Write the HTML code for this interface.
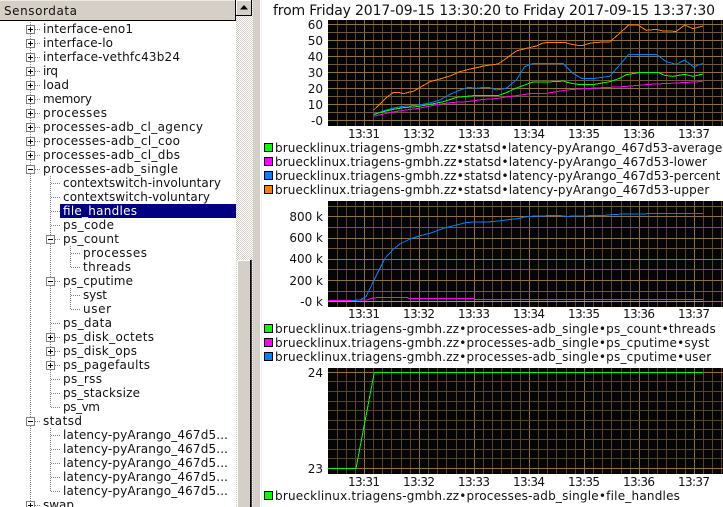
<!DOCTYPE html>
<html><head><meta charset="utf-8"><style>
html,body{margin:0;padding:0;background:#fff;width:723px;height:507px;overflow:hidden}
svg{display:block;position:absolute;left:0;top:0}
text{font-family:"DejaVu Sans",sans-serif;font-size:12px;fill:#111;white-space:pre}
.t{font-size:14px}
.a{font-size:12px}
.r{text-anchor:end}
.m{text-anchor:middle}
.l polyline{fill:none;stroke-width:3;shape-rendering:crispEdges}
</style></head><body>
<svg width="723" height="507" viewBox="0 0 723 507" xmlns="http://www.w3.org/2000/svg">
<defs>
<pattern id="ck" width="2" height="2" patternUnits="userSpaceOnUse"><rect width="2" height="2" fill="#fff"/><rect width="1" height="1" fill="#d4d0c8"/><rect x="1" y="1" width="1" height="1" fill="#d4d0c8"/></pattern>
<g id="plus"><rect x=".5" y=".5" width="8" height="8" fill="#fff" stroke="#808080"/><path d="M2 4.5H7M4.5 2V7" stroke="#000" fill="none"/></g>
<g id="minus"><rect x=".5" y=".5" width="8" height="8" fill="#fff" stroke="#808080"/><path d="M2 4.5H7" stroke="#000" fill="none"/></g>
<path id="vmin" fill="none" stroke-width="1" d="M337.5 0V1M346.5 0V1M355.5 0V1M373.5 0V1M382.5 0V1M391.5 0V1M401.5 0V1M410.5 0V1M428.5 0V1M437.5 0V1M446.5 0V1M456.5 0V1M465.5 0V1M483.5 0V1M492.5 0V1M501.5 0V1M511.5 0V1M520.5 0V1M538.5 0V1M547.5 0V1M556.5 0V1M566.5 0V1M575.5 0V1M593.5 0V1M602.5 0V1M611.5 0V1M621.5 0V1M630.5 0V1M648.5 0V1M657.5 0V1M666.5 0V1M676.5 0V1M685.5 0V1M703.5 0V1M712.5 0V1M721.5 0V1"/>
<path id="vmaj" fill="none" stroke-width="1" d="M364.5 0V1M419.5 0V1M474.5 0V1M529.5 0V1M584.5 0V1M639.5 0V1M694.5 0V1"/>
</defs>

<!-- left header -->
<rect x="0" y="0" width="235" height="20" fill="#d4d0c8"/>
<path d="M0 .5H235" stroke="#eeeae2"/>
<path d="M0 20.5H236M235.5 0V21" stroke="#000"/>
<text x="4" y="15" textLength="73" lengthAdjust="spacing">Sensordata</text>

<!-- selection -->
<rect x="60" y="204" width="176" height="14" fill="#000080"/>

<!-- tree lines -->
<g stroke="#808080" stroke-dasharray="1 1" fill="none">
<path d="M30.5 22V507"/>
<path d="M50.5 176V407.5"/>
<path d="M70.5 246V267.5M70.5 288V309.5"/>
<path d="M50.5 428V491.5"/>
<path d="M35 29.5H40M35 43.5H40M35 57.5H40M35 71.5H40M35 85.5H40M35 99.5H40M35 113.5H40M35 127.5H40M35 141.5H40M35 155.5H40M35 169.5H40M35 421.5H40M35 505.5H40"/>
<path d="M51 183.5H60M51 197.5H60M51 211.5H60M51 225.5H60M55 239.5H60M55 281.5H60M51 323.5H60M55 337.5H60M55 351.5H60M55 365.5H60M51 379.5H60M51 393.5H60M51 407.5H60M51 435.5H60M51 449.5H60M51 463.5H60M51 477.5H60M51 491.5H60"/>
<path d="M71 253.5H80M71 267.5H80M71 295.5H80M71 309.5H80"/>
</g>
<use href="#plus" x="26" y="25"/><use href="#plus" x="26" y="39"/><use href="#plus" x="26" y="53"/><use href="#plus" x="26" y="67"/><use href="#plus" x="26" y="81"/><use href="#plus" x="26" y="95"/><use href="#plus" x="26" y="109"/><use href="#plus" x="26" y="123"/><use href="#plus" x="26" y="137"/><use href="#plus" x="26" y="151"/>
<use href="#minus" x="26" y="165"/>
<use href="#minus" x="46" y="235"/><use href="#minus" x="46" y="277"/>
<use href="#plus" x="46" y="333"/><use href="#plus" x="46" y="347"/><use href="#plus" x="46" y="361"/>
<use href="#minus" x="26" y="417"/><use href="#plus" x="26" y="501"/>

<!-- tree text -->
<text x="43" y="33" textLength="90">interface-eno1</text>
<text x="43" y="47" textLength="70">interface-lo</text>
<text x="43" y="61" textLength="137">interface-vethfc43b24</text>
<text x="43" y="75" textLength="15">irq</text>
<text x="43" y="89" textLength="26">load</text>
<text x="43" y="103" textLength="49">memory</text>
<text x="43" y="117" textLength="64">processes</text>
<text x="43" y="131" textLength="160">processes-adb_cl_agency</text>
<text x="43" y="145" textLength="137">processes-adb_cl_coo</text>
<text x="43" y="159" textLength="137">processes-adb_cl_dbs</text>
<text x="43" y="173" textLength="135">processes-adb_single</text>
<text x="63" y="187" textLength="158">contextswitch-involuntary</text>
<text x="63" y="201" textLength="147">contextswitch-voluntary</text>
<text x="63" y="215" textLength="74" style="fill:#fff">file_handles</text>
<text x="63" y="229" textLength="51">ps_code</text>
<text x="63" y="243" textLength="56">ps_count</text>
<text x="83" y="257" textLength="64">processes</text>
<text x="83" y="271" textLength="48">threads</text>
<text x="63" y="285" textLength="70">ps_cputime</text>
<text x="83" y="299" textLength="24">syst</text>
<text x="83" y="313" textLength="28">user</text>
<text x="63" y="327" textLength="49">ps_data</text>
<text x="63" y="341" textLength="91">ps_disk_octets</text>
<text x="63" y="355" textLength="74">ps_disk_ops</text>
<text x="63" y="369" textLength="87">ps_pagefaults</text>
<text x="63" y="383" textLength="39">ps_rss</text>
<text x="63" y="397" textLength="77">ps_stacksize</text>
<text x="63" y="411" textLength="37">ps_vm</text>
<text x="43" y="425" textLength="39">statsd</text>
<text x="63" y="439" textLength="165">latency-pyArango_467d5...</text>
<text x="63" y="453" textLength="165">latency-pyArango_467d5...</text>
<text x="63" y="467" textLength="165">latency-pyArango_467d5...</text>
<text x="63" y="481" textLength="165">latency-pyArango_467d5...</text>
<text x="63" y="495" textLength="165">latency-pyArango_467d5...</text>
<text x="43" y="509" textLength="31">swap</text>

<!-- scrollbar -->
<rect x="236" y="0" width="17" height="507" fill="url(#ck)"/>
<rect x="236" y="0" width="16" height="15" fill="#d4d0c8"/>
<path d="M236.5 15V.5H251" stroke="#fff" fill="none"/>
<path d="M236 15.5H251.5V0" stroke="#000" fill="none"/>
<path d="M244 5L248 9.5H240Z" fill="#000"/>
<rect x="237" y="260" width="15" height="247" fill="#d4d0c8"/>
<path d="M237.5 507V260.5H250" stroke="#fff" fill="none"/>
<path d="M250.5 260V507" stroke="#000" fill="none"/>
<path d="M251.5 260V507" stroke="#404040" fill="none"/>
<!-- splitter -->
<rect x="253" y="0" width="7" height="507" fill="#d4d0c8"/>
<rect x="261" y="0" width="1" height="507" fill="#eceef2"/>

<!-- title -->
<text class="t" x="273" y="15" textLength="442" lengthAdjust="spacing">from Friday 2017-09-15 13:30:20 to Friday 2017-09-15 13:37:30</text>

<!-- plot 1 -->
<rect x="328" y="20" width="395" height="106" fill="#050505"/>
<g transform="translate(0 20) scale(1 106)"><use href="#vmin" stroke="#574626"/></g>
<g transform="translate(0 20) scale(1 106)"><use href="#vmaj" stroke="#8f7240"/></g>
<path fill="none" stroke="#6e5a33" d="M328 32.5H723M328 48.5H723M328 64.5H723M328 80.5H723M328 96.5H723M328 112.5H723"/>
<path fill="none" stroke="#8f7240" d="M328 24.5H723M328 40.5H723M328 56.5H723M328 72.5H723M328 88.5H723M328 104.5H723M328 120.5H723"/>
<g class="l" transform="translate(260 0) scale(.33333)">
<polyline stroke="#ff8000" points="341,330 360,312 380,292 400,277 415,277 430,281 445,277 460,274 480,262 510,245 540,237 570,228 600,215 630,207 660,201 669,198"/>
<polyline stroke="#0080ff" points="341,345 370,333 400,324 430,319 470,316 510,309 540,300 570,283 600,270 625,262 650,265 669,262"/>
<polyline stroke="#00ff00" points="341,343 370,335 400,328 430,323 470,320 510,313 550,305 590,292 620,289 640,287 669,287"/>
<polyline stroke="#ff00ff" points="341,349 370,342 400,336 430,331 470,326 510,318 540,312 580,307 610,306 650,301 669,298"/>
</g>
<g class="l" transform="translate(483 0) scale(.33333)">
<polyline stroke="#ff8000" points="0,198 45,192 70,175 100,153 130,145 160,138 180,129 200,127 245,127 260,132 285,136 300,136 320,130 340,127 380,126 410,100 437,75 465,75 490,91 520,88 540,93 580,94 605,75 630,86 660,78"/>
<polyline stroke="#0080ff" points="0,262 20,263 40,270 70,265 100,240 125,200 150,190 240,190 270,220 295,235 335,235 380,229 410,195 437,163 520,163 550,185 580,193 605,180 632,201 660,190"/>
<polyline stroke="#00ff00" points="0,287 45,287 70,278 100,264 150,246 225,245 240,243 260,249 285,253 335,253 380,245 410,235 430,224 475,217 525,217 545,226 570,229 605,223 630,229 660,222"/>
<polyline stroke="#ff00ff" points="0,298 30,297 70,291 100,287 140,281 190,280 250,270 300,266 420,260 500,253 560,250 650,245 660,243"/>
</g>
<text class="r" x="323" y="29">60</text><text class="r" x="323" y="45">50</text><text class="r" x="323" y="61">40</text><text class="r" x="323" y="77">30</text><text class="r" x="323" y="93">20</text><text class="r" x="323" y="109">10</text><text class="r" x="323" y="125">-0</text>
<text class="m a" x="364" y="138" textLength="32">13:31</text><text class="m a" x="419" y="138" textLength="32">13:32</text><text class="m a" x="474" y="138" textLength="32">13:33</text><text class="m a" x="529" y="138" textLength="32">13:34</text><text class="m a" x="584" y="138" textLength="32">13:35</text><text class="m a" x="639" y="138" textLength="32">13:36</text><text class="m a" x="694" y="138" textLength="32">13:37</text>
<g stroke="#000">
<rect x="264.5" y="143.5" width="8" height="8" fill="#00ff00"/>
<rect x="264.5" y="157.5" width="8" height="8" fill="#ff00ff"/>
<rect x="264.5" y="171.5" width="8" height="8" fill="#0080ff"/>
<rect x="264.5" y="185.5" width="8" height="8" fill="#ff8000"/>
</g>
<text x="275" y="152" style="letter-spacing:.1px">bruecklinux.triagens-gmbh.zz•statsd•latency-pyArango_467d53-average</text>
<text x="275" y="166" style="letter-spacing:.12px">bruecklinux.triagens-gmbh.zz•statsd•latency-pyArango_467d53-lower</text>
<text x="275" y="180" style="letter-spacing:.12px">bruecklinux.triagens-gmbh.zz•statsd•latency-pyArango_467d53-percent</text>
<text x="275" y="194" style="letter-spacing:.12px">bruecklinux.triagens-gmbh.zz•statsd•latency-pyArango_467d53-upper</text>

<!-- plot 2 -->
<rect x="328" y="201" width="395" height="106" fill="#050505"/>
<g transform="translate(0 201) scale(1 106)"><use href="#vmin" stroke="#574626"/></g>
<g transform="translate(0 201) scale(1 106)"><use href="#vmaj" stroke="#8f7240"/></g>
<path fill="none" stroke="#6e5a33" d="M328 206.5H723M328 227.5H723M328 248.5H723M328 269.5H723M328 291.5H723"/>
<path fill="none" stroke="#8f7240" d="M328 216.5H723M328 238.5H723M328 259.5H723M328 280.5H723M328 301.5H723"/>
<g class="l" transform="translate(260 130) scale(.33333)">
<polyline stroke="#00ff00" points="205,514 1329,514"/>
<polyline stroke="#ff00ff" points="205,511 275,511 320,510 335,505 358,502 443,502 445,505 640,505 645,508 1329,508"/>
<polyline stroke="#0080ff" points="275,512 300,510 318,500 340,455 360,415 375,385 400,358 420,342 450,327 480,317 510,310 550,295 590,285 620,277 669,276"/>
</g>
<g class="l" transform="translate(483 190) scale(.33333)">
<polyline stroke="#0080ff" points="0,97 25,95 55,92 85,88 105,86 120,82 140,79 225,76 250,79 365,76 395,73 560,70 660,70"/>
</g>
<text class="r" x="323" y="221">800 k</text><text class="r" x="323" y="242">600 k</text><text class="r" x="323" y="263">400 k</text><text class="r" x="323" y="285">200 k</text><text class="r" x="323" y="306">-0 k</text>
<text class="m a" x="364" y="318" textLength="32">13:31</text><text class="m a" x="419" y="318" textLength="32">13:32</text><text class="m a" x="474" y="318" textLength="32">13:33</text><text class="m a" x="529" y="318" textLength="32">13:34</text><text class="m a" x="584" y="318" textLength="32">13:35</text><text class="m a" x="639" y="318" textLength="32">13:36</text><text class="m a" x="694" y="318" textLength="32">13:37</text>
<g stroke="#000">
<rect x="264.5" y="324.5" width="8" height="8" fill="#00ff00"/>
<rect x="264.5" y="338.5" width="8" height="8" fill="#ff00ff"/>
<rect x="264.5" y="352.5" width="8" height="8" fill="#0080ff"/>
</g>
<text x="275" y="333" style="letter-spacing:.21px">bruecklinux.triagens-gmbh.zz•processes-adb_single•ps_count•threads</text>
<text x="275" y="347" style="letter-spacing:.21px">bruecklinux.triagens-gmbh.zz•processes-adb_single•ps_cputime•syst</text>
<text x="275" y="361" style="letter-spacing:.21px">bruecklinux.triagens-gmbh.zz•processes-adb_single•ps_cputime•user</text>

<!-- plot 3 -->
<rect x="328" y="368" width="395" height="106" fill="#050505"/>
<g transform="translate(0 368) scale(1 106)"><use href="#vmin" stroke="#574626"/></g>
<g transform="translate(0 368) scale(1 106)"><use href="#vmaj" stroke="#8f7240"/></g>
<path fill="none" stroke="#574626" d="M328 381.5H723M328 391.5H723M328 401.5H723M328 410.5H723M328 420.5H723M328 429.5H723M328 439.5H723M328 449.5H723M328 458.5H723"/>
<path fill="none" stroke="#8f7240" d="M328 372.5H723M328 468.5H723"/>
<g class="l" transform="translate(260 320) scale(.33333)">
<polyline stroke="#00ff00" points="205,445 288,445 343,157 1329,157"/>
</g>
<text class="r" x="323" y="377">24</text><text class="r" x="323" y="473">23</text>
<text class="m a" x="364" y="486" textLength="32">13:31</text><text class="m a" x="419" y="486" textLength="32">13:32</text><text class="m a" x="474" y="486" textLength="32">13:33</text><text class="m a" x="529" y="486" textLength="32">13:34</text><text class="m a" x="584" y="486" textLength="32">13:35</text><text class="m a" x="639" y="486" textLength="32">13:36</text><text class="m a" x="694" y="486" textLength="32">13:37</text>
<rect x="264.5" y="491.5" width="8" height="8" fill="#00ff00" stroke="#000"/>
<text x="275" y="500" style="letter-spacing:.21px">bruecklinux.triagens-gmbh.zz•processes-adb_single•file_handles</text>
</svg>
</body></html>
